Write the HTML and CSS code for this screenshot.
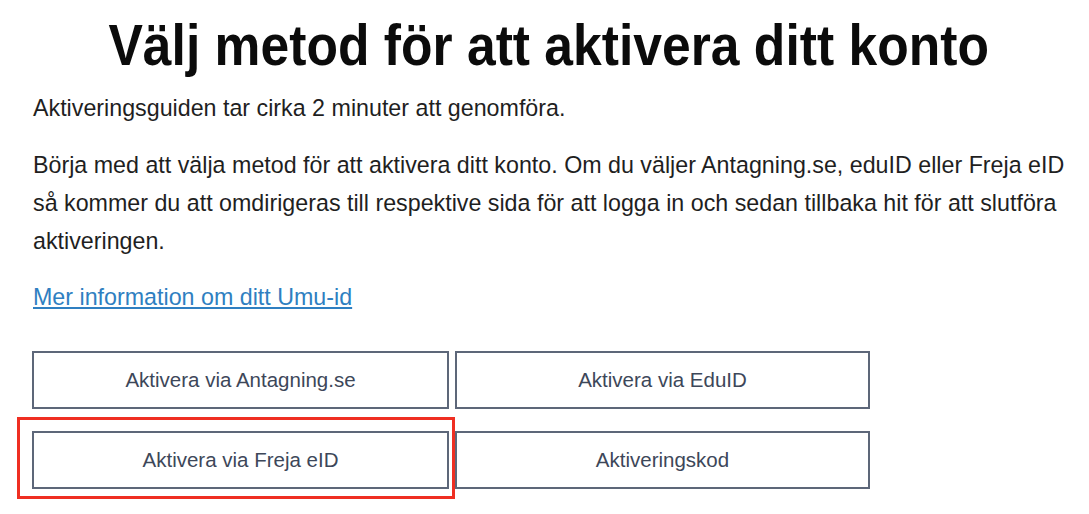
FILE: index.html
```html
<!DOCTYPE html>
<html lang="sv">
<head>
<meta charset="utf-8">
<title>Välj metod för att aktivera ditt konto</title>
<link rel="stylesheet" href="styles.css">
</head>
<body>
<main class="page">
  <h1 class="title"><span class="title-text">Välj metod för att aktivera ditt konto</span></h1>
  <p class="lead">Aktiveringsguiden tar cirka 2 minuter att genomföra.</p>
  <p class="text">Börja med att välja metod för att aktivera ditt konto. Om du väljer Antagning.se, eduID eller Freja eID så kommer du att omdirigeras till respektive sida för att logga in och sedan tillbaka hit för att slutföra aktiveringen.</p>
  <p class="more"><a class="link" href="#">Mer information om ditt Umu-id</a></p>
  <div class="options">
    <div class="cell"><button class="option" type="button">Aktivera via Antagning.se</button></div>
    <div class="cell"><button class="option" type="button">Aktivera via EduID</button></div>
    <div class="cell cell-marked"><button class="option" type="button">Aktivera via Freja eID</button></div>
    <div class="cell"><button class="option" type="button">Aktiveringskod</button></div>
  </div>
</main>
</body>
</html>
```
FILE: styles.css
```css
html, body {
  margin: 0;
  padding: 0;
  background: #ffffff;
}

body {
  font-family: "Liberation Sans", Arial, sans-serif;
  color: #1f1f1f;
}

.page {
  width: 1040px;
  padding: 12px 0 25px 33px;
}

.title {
  margin: 0 0 0 -8px;
  font-size: 58px;
  line-height: 66px;
  font-weight: 700;
  color: #0b0b0b;
  text-align: center;
  white-space: nowrap;
}

.title-text {
  display: inline-block;
  transform: scaleX(0.89);
  transform-origin: center;
}

.lead {
  margin: 11px 0 0;
  font-size: 23.25px;
  line-height: 38px;
}

.text {
  margin: 19px 0 0;
  font-size: 23.25px;
  line-height: 38px;
}

.more {
  margin: 18px 0 0;
  font-size: 23.25px;
  line-height: 38px;
}

.link {
  color: #2f7fc1;
  text-decoration: underline;
  text-underline-offset: 2px;
}

.options {
  margin-top: 35px;
  margin-left: -1px;
  display: grid;
  grid-template-columns: 417px 415px;
  column-gap: 6px;
  row-gap: 22px;
}

.cell {
  display: flex;
}

.option {
  flex: 1;
  height: 58px;
  border: 2px solid #5d6779;
  background: #ffffff;
  font-family: "Liberation Sans", Arial, sans-serif;
  font-size: 20.5px;
  color: #3d4759;
  padding: 0;
}

.cell-marked {
  position: relative;
}

.cell-marked::after {
  content: "";
  position: absolute;
  left: -15px;
  top: -14px;
  right: -6px;
  bottom: -10px;
  border: 3px solid #ef2f22;
  pointer-events: none;
}
```
